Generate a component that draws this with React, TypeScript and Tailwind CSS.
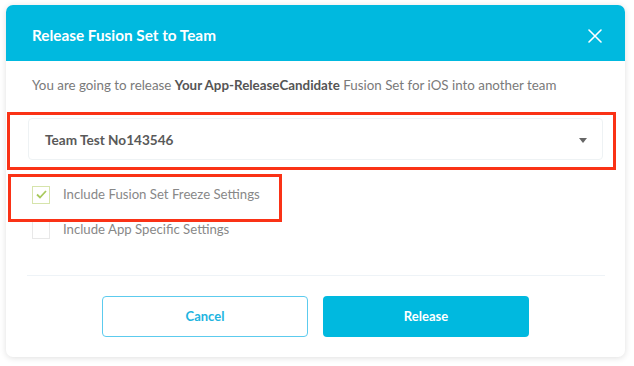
import React from 'react';

export default function App() {
  return (
    <div className="w-[634px] h-[366px] bg-white pt-[5px] pl-[6px]" style={{ fontFamily: 'Lato, "Open Sans", sans-serif' }}>
      <div className="relative w-[619px] h-[352px] bg-white rounded-[7px] shadow-[0_1px_6px_rgba(0,0,0,0.13)] overflow-hidden flex flex-col">
        {/* Header */}
        <div className="h-[56px] bg-[#00b9df] flex items-center justify-between pl-[26px] pr-[23px] pt-[4px] shrink-0">
          <h2 className="text-white font-bold text-[15.3px]">Release Fusion Set to Team</h2>
          <svg width="14" height="14" viewBox="0 0 14 14" className="mt-[2px]">
            <path d="M1 1L13 13M13 1L1 13" stroke="white" strokeWidth="1.6" strokeLinecap="round" />
          </svg>
        </div>

        {/* Body */}
        <p className="mt-[15px] ml-[26px] text-[13.35px] leading-[18px] text-[#7a7a7a]">
          You are going to release <span className="font-bold text-[#555]">Your App-ReleaseCandidate</span> Fusion Set for iOS into another team
        </p>

        <div className="mt-[24px] mx-[22px] h-[42px] border border-[#eef2f4] rounded-[4px] flex items-center justify-between pl-[16px] pr-[15px] pt-[2px]">
          <span className="text-[13.6px] font-bold text-[#595959]">Team Test No143546</span>
          <svg width="8" height="5" viewBox="0 0 8 5">
            <path d="M0 0H8L4 5Z" fill="#666" />
          </svg>
        </div>

        <div className="mt-[25px] ml-[26px] flex items-center h-[19px]">
          <div className="w-[18px] h-[18px] border border-[#d6e4ab] flex items-center justify-center">
            <svg width="11" height="9" viewBox="0 0 11 9">
              <path d="M1 4.5L4 7.5L10 1" stroke="#a8c95c" strokeWidth="1.8" fill="none" />
            </svg>
          </div>
          <span className="ml-[13px] text-[13.2px] text-[#888]">Include Fusion Set Freeze Settings</span>
        </div>

        <div className="mt-[16px] ml-[26px] flex items-center h-[19px]">
          <div className="w-[18px] h-[18px] border border-[#e8e8e8]" />
          <span className="ml-[13px] text-[13.2px] text-[#888]">Include App Specific Settings</span>
        </div>

        <div className="mt-[36px] ml-[21px] mr-[20px] h-px bg-[#eef3f7]" />

        <div className="mt-[20px] flex justify-center gap-[15px]">
          <button className="w-[206px] h-[41px] rounded-[4px] border-[1.5px] border-[#5ccbee] text-[#22b4df] font-bold text-[13px] bg-white">
            Cancel
          </button>
          <button className="w-[206px] h-[41px] rounded-[4px] bg-[#00b9df] text-white font-bold text-[13px]">
            Release
          </button>
        </div>

        {/* Annotation highlights */}
        <div className="absolute left-[1px] top-[107px] w-[609px] h-[58px] border-[3px] border-[#fa3216]" />
        <div className="absolute left-[2px] top-[169px] w-[274px] h-[48px] border-[3px] border-[#fa3216]" />
      </div>
    </div>
  );
}
